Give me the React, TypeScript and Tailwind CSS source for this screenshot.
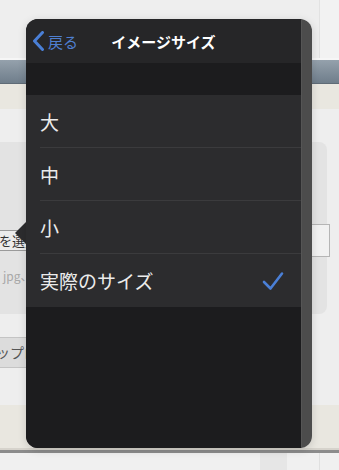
import React from 'react';

const rows = [
  { label: '大', checked: false },
  { label: '中', checked: false },
  { label: '小', checked: false },
  { label: '実際のサイズ', checked: true },
];

function Backdrop() {
  return (
    <div className="w-[339px] h-[470px] flex flex-col bg-[#eeeeee] overflow-hidden">
      {/* top page area */}
      <div className="h-[58px] flex justify-end">
        <div className="w-[20px] border-l border-[#e2e2e2] bg-[#f2f2f2]" />
      </div>
      <div className="h-[2px] bg-[#f6f6f6]" />
      {/* toolbar band */}
      <div className="h-[24px] bg-gradient-to-b from-[#95a1ac] to-[#6f7e8b] border-b border-[#5f6b76]" />
      {/* beige strip */}
      <div className="h-[25px] bg-[#e9e7e0]" />
      {/* content */}
      <div className="flex-1 flex flex-col pt-[33px]">
        <div className="h-[172px] mr-[12px] rounded-r-[8px] bg-[#e3e3e3] flex flex-col pt-[82px]">
          <div className="flex items-center">
            <div className="w-[26px] h-[21px] overflow-hidden border-y border-[#9a9a9a] bg-[#ececec]">
              <div className="-ml-[1px] text-[13px] leading-[19px] text-[#333] whitespace-nowrap">を選択</div>
            </div>
            <div className="flex-1" />
            <div className="w-[30px] h-[33px] -mr-[3px] border border-[#b5b5b5] bg-[#f1f1f1]" />
          </div>
          <div className="mt-[10px] w-[26px] overflow-hidden">
            <div className="pl-[3px] text-[12px] text-[#a8a8a8] whitespace-nowrap">jpg、</div>
          </div>
        </div>
        <div className="mt-[23px] w-[26px] h-[31px] border-y border-[#c4c4c4] bg-[#dcdcdc] flex items-center overflow-hidden">
          <div className="-ml-[4px] text-[14px] text-[#555] whitespace-nowrap">ップロ</div>
        </div>
        <div className="flex-1" />
      </div>
      <div className="h-[43px] bg-[#e9e7e0]" />
      <div className="h-[2px] bg-[#d6d3cc]" />
      <div className="h-[3px] bg-[#8c8c8c]" />
      <div className="h-[17px] flex bg-[#f0f0f0]">
        <div className="w-[260px]" />
        <div className="w-[27px] bg-[#e6e6e6]" />
        <div className="w-[32px]" />
        <div className="flex-1 border-l border-[#e0e0e0]" />
      </div>
    </div>
  );
}

export default function App() {
  return (
    <div className="relative w-[339px] h-[470px] overflow-hidden font-['Noto_Sans_CJK_JP',sans-serif]">
      <Backdrop />

      {/* popover arrow */}
      <div className="absolute left-[15px] top-[221px] w-0 h-0 border-y-[12px] border-y-transparent border-r-[12px] border-r-[#2c2c2e]" />

      {/* popover */}
      <div className="absolute left-[26px] top-[19px] w-[286px] h-[429px] rounded-[12px] overflow-hidden flex shadow-[0_2px_8px_rgba(0,0,0,0.15)]">
        <div className="w-[275px] flex flex-col bg-[#1c1c1e]">
          {/* header */}
          <div className="relative h-[44px] bg-[#262628] flex items-center justify-center">
            <div className="absolute left-[6px] top-0 h-full flex items-center gap-[3px] text-[#4f7fd0]">
              <svg width="13" height="20" viewBox="0 0 13 20" fill="none">
                <path d="M10.5 1.5 L2.5 10 L10.5 18.5" stroke="#4a7fd6" strokeWidth="3" strokeLinecap="round" strokeLinejoin="round" />
              </svg>
              <span className="text-[15px] leading-none">戻る</span>
            </div>
            <span className="text-white text-[15px] font-bold leading-none">イメージサイズ</span>
          </div>
          {/* section gap */}
          <div className="h-[32px] bg-[#1c1c1e]" />
          {/* rows */}
          <div className="flex flex-col bg-[#2c2c2e]">
            {rows.map((r, i) => (
              <div key={r.label} className="h-[53px] pl-[14px] flex flex-col">
                <div className="flex-1 flex items-center pr-[17px]">
                  <span className="flex-1 text-[19px] text-[#ebebeb] leading-none">{r.label}</span>
                  {r.checked && (
                    <svg width="22" height="20" viewBox="0 0 22 20" fill="none">
                      <path d="M2 11 L8.5 17.5 L20 2.5" stroke="#4a7fd6" strokeWidth="2.6" strokeLinecap="round" strokeLinejoin="round" />
                    </svg>
                  )}
                </div>
                {i < rows.length - 1 && <div className="h-px bg-[#3b3b3d]" />}
              </div>
            ))}
          </div>
          <div className="flex-1 bg-[#1c1c1e]" />
        </div>
        {/* right strip */}
        <div className="flex-1 bg-[#4c4c4c] border-l border-[#555]" />
      </div>
    </div>
  );
}
